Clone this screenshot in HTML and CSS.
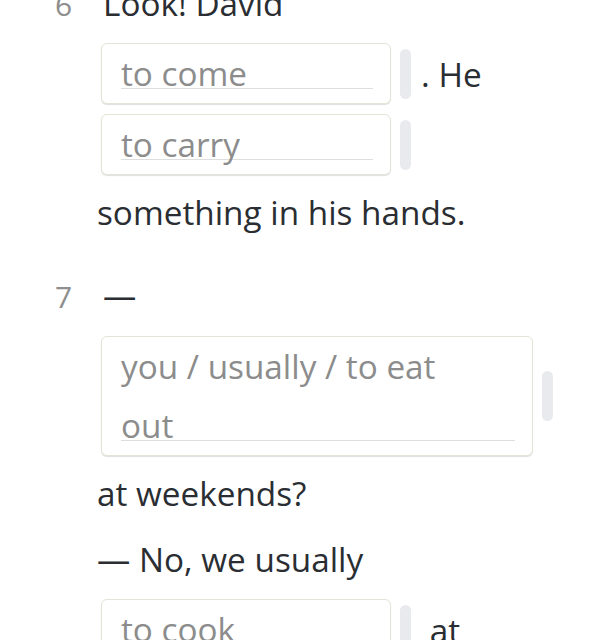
FILE: index.html
```html
<!DOCTYPE html>
<html lang="en">
<head>
<meta charset="utf-8">
<title>Exercise</title>
<link rel="stylesheet" href="styles.css">
</head>
<body>
<div class="page">
  <div class="item item-6">
    <div class="row row-head"><span class="num">6</span><span class="txt">Look! David</span></div>
    <div class="row row-gap row-b">
      <div class="box box-sm"><div class="field">to come</div></div>
      <span class="pill"></span>
      <span class="txt after">. He</span>
    </div>
    <div class="row row-gap row-c">
      <div class="box box-sm"><div class="field">to carry</div></div>
      <span class="pill"></span>
    </div>
    <div class="row row-text row-d"><span class="txt">something in his hands.</span></div>
  </div>
  <div class="item item-7">
    <div class="row row-head row-e"><span class="num">7</span><span class="txt">—</span></div>
    <div class="row row-gap row-f">
      <div class="box box-lg"><div class="field">you / usually / to eat<br>out</div></div>
      <span class="pill"></span>
    </div>
    <div class="row row-text row-g"><span class="txt">at weekends?</span></div>
    <div class="row row-text row-h"><span class="txt">— No, we usually</span></div>
    <div class="row row-gap row-i">
      <div class="box box-sm"><div class="field">to cook</div></div>
      <span class="pill"></span>
      <span class="txt after">&nbsp;at</span>
    </div>
  </div>
</div>
</body>
</html>
```

FILE: styles.css
```css
html, body {
  margin: 0;
  padding: 0;
  background: #ffffff;
}

body {
  font-family: "Open Sans", "Noto Sans", sans-serif;
  color: #2a2e33;
  overflow: hidden;
  height: 640px;
}

.page {
  padding-left: 97px;
}

.row {
  display: flex;
}

.txt {
  font-size: 33.3px;
  line-height: 46px;
  white-space: pre;
}

.row-head {
  align-items: baseline;
  margin-left: -42px;
}

.num {
  width: 48px;
  font-size: 30px;
  line-height: 46px;
  color: #8e8e8e;
}

.item-6 .row-head {
  margin-top: -20px;
}

.row-gap {
  align-items: center;
}

.box {
  margin-left: 4px;
  box-sizing: border-box;
  border: 1px solid #e6e4d6;
  border-radius: 6px;
  box-shadow: 0 1px 1px rgba(0, 0, 0, 0.13);
  padding: 0 17px 0 19px;
  background: #ffffff;
}

.box-sm {
  width: 290px;
}

.box-lg {
  width: 432px;
}

.field {
  font-size: 33.3px;
  line-height: 59px;
  color: #8c8c8c;
  white-space: nowrap;
  background: linear-gradient(#dedede, #dedede) no-repeat left bottom 14px / 100% 1px;
}

.pill {
  width: 11px;
  height: 50px;
  margin-left: 9px;
  border-radius: 6px;
  background: #e8eaee;
}

.after {
  margin-left: 10px;
}

.row-b { margin-top: 15px; }
.row-c { margin-top: 10px; }
.row-d { margin-top: 14px; }
.row-e { margin-top: 37px; }
.row-f { margin-top: 16px; }
.row-g { margin-top: 14px; }
.row-h { margin-top: 20px; }
.row-i { margin-top: 17px; }
```
